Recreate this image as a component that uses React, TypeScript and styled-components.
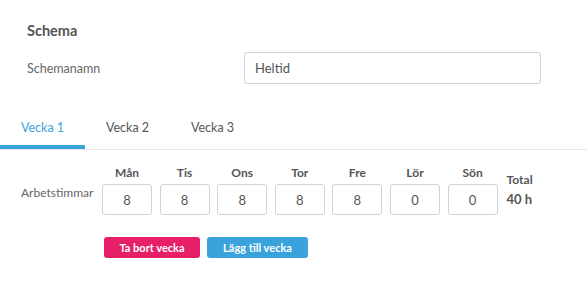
import React, { useState } from 'react';
import styled, { createGlobalStyle } from 'styled-components';

const GlobalStyle = createGlobalStyle`
  html, body {
    margin: 0;
    padding: 0;
    background: #ffffff;
  }
  body {
    font-family: Lato, "Open Sans", Arial, sans-serif;
    color: #555;
  }
  * {
    box-sizing: border-box;
  }
`;

const Page = styled.div`
  width: 587px;
  height: 291px;
  background: #fff;
  overflow: hidden;
`;

const Header = styled.div`
  padding: 23px 27px 0 27px;
`;

const Title = styled.div`
  font-size: 14.5px;
  line-height: 16px;
  font-weight: 700;
  color: #555;
`;

const FormRow = styled.div`
  display: grid;
  grid-template-columns: 217px 297px;
  align-items: center;
  margin-top: 13px;
`;

const Label = styled.label`
  font-size: 12.5px;
  color: #666;
`;

const TextInput = styled.input`
  height: 32px;
  width: 100%;
  border: 1px solid #cfd3d8;
  border-radius: 3px;
  padding: 0 10px;
  font-family: inherit;
  font-size: 13px;
  color: #555;
  outline: none;
`;

const TabBar = styled.div`
  display: flex;
  margin-top: 26px;
  border-bottom: 1px solid #e6e6e6;
`;

const Tab = styled.button<{ $active?: boolean }>`
  width: 85px;
  height: 39px;
  padding: 0;
  border: none;
  border-bottom: 4px solid ${(p) => (p.$active ? '#3aa3dc' : 'transparent')};
  background: none;
  font-family: inherit;
  font-size: 12.5px;
  color: ${(p) => (p.$active ? '#3aa3dc' : '#555')};
  cursor: pointer;
`;

const HoursRow = styled.div`
  display: flex;
  align-items: flex-start;
  margin-top: 15px;
  padding-left: 21px;
`;

const RowLabel = styled.div`
  width: 81px;
  margin-top: 20px;
  font-size: 12px;
  line-height: 16px;
  color: #666;
`;

const Days = styled.div`
  display: flex;
  gap: 7.6px;
`;

const DayCol = styled.div`
  display: flex;
  flex-direction: column;
  align-items: center;
  width: 50px;
`;

const DayName = styled.div`
  font-size: 12px;
  line-height: 16px;
  font-weight: 700;
  color: #555;
  margin-bottom: 3px;
`;

const DayInput = styled.input`
  width: 50px;
  height: 31px;
  border: 1px solid #cfd3d8;
  border-radius: 3px;
  text-align: center;
  font-family: inherit;
  font-size: 13px;
  color: #555;
  outline: none;
`;

const TotalCol = styled.div`
  margin-left: 9px;
  padding-top: 7px;
  font-weight: 700;
  color: #555;
`;

const TotalLabel = styled.div`
  font-size: 12px;
  line-height: 16px;
`;

const TotalValue = styled.div`
  font-size: 13px;
  line-height: 16px;
  margin-top: 3px;
`;

const Actions = styled.div`
  display: flex;
  gap: 7px;
  margin-top: 22px;
  padding-left: 104px;
`;

const ActionButton = styled.button<{ $color: string; $width: number }>`
  width: ${(p) => p.$width}px;
  height: 21px;
  border: none;
  border-radius: 3px;
  background: ${(p) => p.$color};
  color: #fff;
  font-family: inherit;
  font-size: 11px;
  font-weight: 700;
  cursor: pointer;
`;

const days = [
  { name: 'Mån', hours: 8 },
  { name: 'Tis', hours: 8 },
  { name: 'Ons', hours: 8 },
  { name: 'Tor', hours: 8 },
  { name: 'Fre', hours: 8 },
  { name: 'Lör', hours: 0 },
  { name: 'Sön', hours: 0 },
];

const App: React.FC = () => {
  const [tab, setTab] = useState(0);
  const total = days.reduce((s, d) => s + d.hours, 0);

  return (
    <Page>
      <GlobalStyle />
      <Header>
        <Title>Schema</Title>
        <FormRow>
          <Label>Schemanamn</Label>
          <TextInput defaultValue="Heltid" />
        </FormRow>
      </Header>
      <TabBar>
        {['Vecka 1', 'Vecka 2', 'Vecka 3'].map((t, i) => (
          <Tab key={t} $active={tab === i} onClick={() => setTab(i)}>
            {t}
          </Tab>
        ))}
      </TabBar>
      <HoursRow>
        <RowLabel>Arbetstimmar</RowLabel>
        <Days>
          {days.map((d) => (
            <DayCol key={d.name}>
              <DayName>{d.name}</DayName>
              <DayInput defaultValue={String(d.hours)} />
            </DayCol>
          ))}
        </Days>
        <TotalCol>
          <TotalLabel>Total</TotalLabel>
          <TotalValue>{total} h</TotalValue>
        </TotalCol>
      </HoursRow>
      <Actions>
        <ActionButton $color="#e61f68" $width={96}>Ta bort vecka</ActionButton>
        <ActionButton $color="#3aa3dc" $width={101}>Lägg till vecka</ActionButton>
      </Actions>
    </Page>
  );
};

export default App;
